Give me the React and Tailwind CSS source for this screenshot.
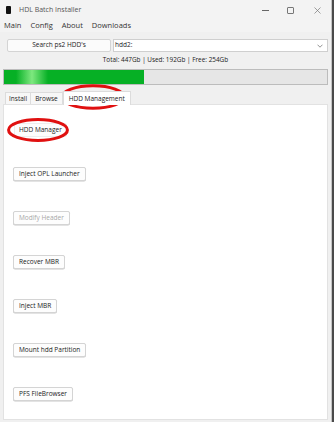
import React from 'react'

const font = { fontFamily: '"Segoe UI", "Open Sans", "Liberation Sans", sans-serif' }

function ActionButton({ label, disabled }) {
  return (
    <div className="h-[14px] flex">
      <button
        type="button"
        disabled={disabled}
        className={
          'h-[14px] px-[5px] bg-[#fdfdfd] border border-[#d4d4d4] rounded-[2px] text-[6.5px] leading-none shadow-[0_0.5px_0_#c8c8c8] ' +
          (disabled ? 'text-[#a8a8a8]' : 'text-[#1a1a1a]')
        }
      >
        {label}
      </button>
    </div>
  )
}

function RedCircle({ className }) {
  return (
    <svg className={'absolute pointer-events-none ' + className} viewBox="0 0 100 40" preserveAspectRatio="none">
      <ellipse cx="50" cy="20" rx="46" ry="16" fill="none" stroke="#e01010" vectorEffect="non-scaling-stroke" style={{ strokeWidth: 3 }} />
    </svg>
  )
}

export default function App() {
  const buttons = [
    { label: 'Inject OPL Launcher' },
    { label: 'Modify Header', disabled: true },
    { label: 'Recover MBR' },
    { label: 'Inject MBR' },
    { label: 'Mount hdd Partition' },
    { label: 'PFS FileBrowser' },
  ]

  return (
    <div className="w-[334px] h-[422px] flex bg-[#d8d8d8] overflow-hidden" style={font}>
      <div className="relative w-[332px] h-[422px] flex flex-col bg-[#f0f0f0] border-r border-[#c4c4c4]">
        {/* title bar */}
        <div className="h-[20px] flex items-center bg-[#f3f3f3]">
          <div className="ml-[6px] w-[5px] h-[8px] bg-[#111] rounded-[1px]" />
          <span className="ml-[8px] text-[7px] text-[#555]">HDL Batch Installer</span>
          <div className="ml-auto flex items-center">
            <div className="w-[24px] flex justify-center">
              <div className="w-[7px] h-[0.6px] bg-[#666]" />
            </div>
            <div className="w-[26px] flex justify-center">
              <div className="w-[7px] h-[7px] border border-[#777] rounded-[1px]" />
            </div>
            <div className="w-[28px] flex justify-center">
              <svg width="7" height="7" viewBox="0 0 7 7">
                <path d="M0.5 0.5 L6.5 6.5 M6.5 0.5 L0.5 6.5" stroke="#777" strokeWidth="0.7" />
              </svg>
            </div>
          </div>
        </div>

        {/* menu */}
        <div className="h-[12px] flex items-center gap-[9px] pl-[4px] bg-[#f3f3f3] text-[7.5px] text-[#333]">
          <span>Main</span>
          <span>Config</span>
          <span>About</span>
          <span>Downloads</span>
        </div>

        {/* drive selector */}
        <div className="mt-[7px] flex h-[13px] pl-[7px] pr-[3px]">
          <button type="button" className="w-[104px] h-[13px] bg-[#fbfbfb] border border-[#d4d4d4] rounded-[2px] text-[6.5px] text-[#1a1a1a] leading-none">
            Search ps2 HDD's
          </button>
          <div className="ml-[2px] flex-1 h-[13px] bg-white border border-[#cfcfcf] flex items-center pl-[1px] pr-[4px]">
            <span className="text-[6.5px] text-[#1a1a1a] leading-none">hdd2:</span>
            <svg className="ml-auto" width="6" height="4" viewBox="0 0 6 4">
              <path d="M0.5 0.7 L3 3.2 L5.5 0.7" fill="none" stroke="#666" strokeWidth="0.7" />
            </svg>
          </div>
        </div>

        <div className="mt-[5px] h-[8px] flex justify-center text-[6.4px] text-[#222] leading-none">
          Total: 447Gb | Used: 192Gb | Free: 254Gb
        </div>

        {/* progress */}
        <div className="mt-[4px] mx-[3px] h-[16px] bg-[#e6e6e6] border border-[#bcbcbc] flex">
          <div className="w-[140px] h-full bg-[linear-gradient(90deg,#06b025_0px,#06b025_12px,#7ee87f_28px,#06b025_44px,#06b025_100%)]" />
        </div>

        {/* tabs */}
        <div className="mt-[6px] mx-[3px] flex items-end h-[13px] relative z-10">
          <div className="ml-[2px] h-[12px] px-[3px] flex items-center bg-[#f7f7f7] border border-b-0 border-[#dcdcdc] text-[6.5px] text-[#222]">
            Install
          </div>
          <div className="h-[12px] px-[4px] flex items-center bg-[#f7f7f7] border border-l-0 border-b-0 border-[#dcdcdc] text-[6.5px] text-[#222]">
            Browse
          </div>
          <div className="h-[14px] -mb-[1px] px-[5px] flex items-center bg-white border border-b-0 border-[#dcdcdc] text-[6.5px] text-[#222]">
            HDD Management
          </div>
        </div>

        {/* panel */}
        <div className="mx-[3px] flex-1 bg-white border border-[#e2e2e2] mb-[2px] flex flex-col gap-[30px] pt-[18px] pl-[9px]">
          <div className="h-[14px] flex">
            <button type="button" className="ml-[1px] h-[14px] px-[4px] bg-[#fdfdfd] border border-[#eeeeee] rounded-[2px] text-[6.5px] text-[#1a1a1a] leading-none">
              HDD Manager
            </button>
          </div>
          {buttons.map((b) => (
            <ActionButton key={b.label} label={b.label} disabled={b.disabled} />
          ))}
        </div>

        <RedCircle className="left-[59px] top-[83px] w-[68px] h-[28px]" />
        <RedCircle className="left-[6px] top-[117px] w-[64px] h-[26px]" />
      </div>
      <div className="w-[2px] h-full bg-[#4a4a4a]" />
    </div>
  )
}
